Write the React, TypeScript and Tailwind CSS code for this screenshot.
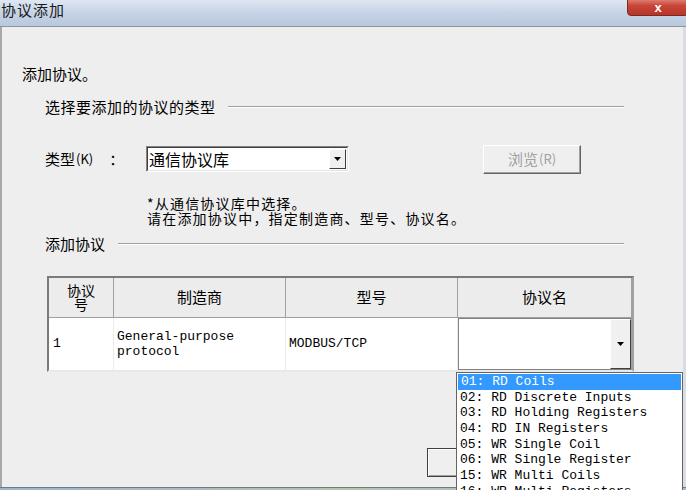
import React from "react";

const cjk = { fontFamily: '"Noto Sans CJK SC", "Noto Sans", sans-serif' };
const mono = { fontFamily: '"Liberation Mono", "Noto Sans CJK SC", monospace' };

function Arrow() {
  return (
    <svg width="7" height="4" viewBox="0 0 7 4">
      <polygon points="0,0 7,0 3.5,4" fill="#000" />
    </svg>
  );
}

const items = [
  "01: RD Coils",
  "02: RD Discrete Inputs",
  "03: RD Holding Registers",
  "04: RD IN Registers",
  "05: WR Single Coil",
  "06: WR Single Register",
  "15: WR Multi Coils",
  "16: WR Multi Registers",
];

export default function App() {
  return (
    <div className="relative w-[686px] h-[490px] overflow-hidden bg-[#eeeeee] flex flex-col" style={cjk}>
      {/* title bar */}
      <div className="relative h-[27px] shrink-0 bg-gradient-to-b from-[#dfe7f2] via-[#c5d3e6] to-[#b8c8dd] border-b border-[#8e949c]">
        <div className="absolute left-[1px] top-[1px] text-[15px] leading-[17px] tracking-[1px] text-[#1a1a1a]">协议添加</div>
        <div className="absolute right-[-3px] top-[-5px] w-[62px] h-[21px] rounded-b-[4px] bg-gradient-to-b from-[#e8a093] via-[#c9453a] to-[#b8352a] border border-[#7a2a22] flex items-end justify-center">
          <span className="text-white text-[13px] leading-[15px] font-bold" style={{ fontFamily: '"Liberation Sans", sans-serif' }}>x</span>
        </div>
      </div>

      {/* body */}
      <div className="relative flex-1 border-l-2 border-l-[#a8a8a8] border-r-[3px] border-r-[#d8dde4] text-[15px] text-black">
        <div className="pl-[20px] pt-[37px] h-[57px] flex items-end">
          <div className="h-[20px] leading-[20px]">添加协议。</div>
        </div>

        <div className="flex items-center pl-[43px] pr-[59px] mt-[13px] h-[20px]">
          <span className="tracking-[0.5px]">选择要添加的协议的类型</span>
          <div className="flex-1 ml-[12px] h-[2px] border-t border-[#a0a0a0] border-b border-b-white" />
        </div>

        <div className="flex items-center pl-[43px] mt-[27px] h-[30px]">
          <span className="w-[101px] flex items-center">
            <span>类型</span>
            <span className="text-[13px] ml-[1px]">(K)</span>
            <span className="ml-[16px]">：</span>
          </span>
          <div className="w-[203px] h-[26px] bg-white border border-[#828282] border-b-white border-r-white flex items-center">
            <div className="flex-1 h-full border border-[#404040] border-b-[#e3e3e3] border-r-[#e3e3e3] flex items-center pl-[1px] text-[16px]">
              通信协议库
              <div className="ml-auto mr-[1px] w-[17px] h-[20px] bg-[#f0f0f0] border border-[#fff] border-b-[#404040] border-r-[#404040] flex items-center justify-center">
                <Arrow />
              </div>
            </div>
          </div>
          <div className="ml-[134px] w-[98px] h-[29px] bg-[#efefef] border border-white border-r-[#646464] border-b-[#646464] flex items-center justify-center text-[#a0a0a0] shadow-[inset_-1px_-1px_0_#a0a0a0]">
            <span>浏览</span>
            <span className="text-[13px] ml-[1px]">(R)</span>
          </div>
        </div>

        <div className="pl-[145px] mt-[22px] leading-[15px] h-[30px] text-[14px] tracking-[1.2px]">
          <div>*从通信协议库中选择。</div>
          <div>请在添加协议中，指定制造商、型号、协议名。</div>
        </div>

        <div className="flex items-center pl-[43px] pr-[59px] mt-[8px] h-[20px]">
          <span>添加协议</span>
          <div className="flex-1 ml-[13px] h-[2px] border-t border-[#a0a0a0] border-b border-b-white" />
        </div>

        {/* table */}
        <div className="ml-[45px] mt-[22px] w-[587px] border-2 border-[#7a7a7a] border-b-[#e8e8e8] border-r-[#a0a0a0] bg-white">
          <div className="flex h-[40px] bg-[#ececec] border-b border-[#a0a0a0]">
            <div className="w-[65px] border-r border-[#a0a0a0] flex flex-col items-center justify-center leading-[14px] text-[14px] pb-[1px]">
              <span>协议</span>
              <span>号</span>
            </div>
            <div className="w-[172px] border-r border-[#a0a0a0] flex items-center justify-center">制造商</div>
            <div className="w-[172px] border-r border-[#a0a0a0] flex items-center justify-center">型号</div>
            <div className="flex-1 border-r border-[#a0a0a0] flex items-center justify-center">协议名</div>
          </div>
          <div className="flex h-[52px] text-[13px]" style={mono}>
            <div className="w-[65px] border-r border-[#ececec] flex items-center pl-[4px]">1</div>
            <div className="w-[172px] border-r border-[#ececec] flex flex-col justify-center pl-[3px] leading-[15px] pb-[1px]">
              <span>General-purpose</span>
              <span>protocol</span>
            </div>
            <div className="w-[172px] border-r border-[#ececec] flex items-center pl-[3px]">MODBUS/TCP</div>
            <div className="flex-1 flex border border-[#828282] border-r-[#a0a0a0]">
              <div className="flex-1" />
              <div className="w-[21px] bg-[#f0f0f0] border border-white border-r-[#404040] border-b-[#404040] flex items-center justify-center">
                <Arrow />
              </div>
            </div>
          </div>
        </div>

        {/* partially hidden button */}
        <div className="absolute left-[425px] top-[421px] w-[80px] h-[29px] bg-[#efefef] border border-[#404040] shadow-[inset_1px_1px_0_#fff,inset_-1px_-1px_0_#a0a0a0]" />

        {/* dropdown list */}
        <div className="absolute left-[454px] top-[345px] w-[227px] h-[130px] bg-white border border-[#646464] pt-[1px]" style={mono}>
          {items.map((t, i) => (
            <div
              key={t}
              className={
                "h-[15.67px] leading-[15.67px] pl-[3px] whitespace-pre text-[13px] " +
                (i === 0 ? "bg-[#3399ff] text-white mx-[1px] pl-[2px]" : "text-black")
              }
            >
              {t}
            </div>
          ))}
        </div>
      </div>

      {/* bottom frame */}
      <div className="h-[3px] shrink-0 bg-gradient-to-r from-[#9fb3cc] via-[#b8c4ad] to-[#a9bbd1] border-t border-[#6f7a85]" />
    </div>
  );
}
